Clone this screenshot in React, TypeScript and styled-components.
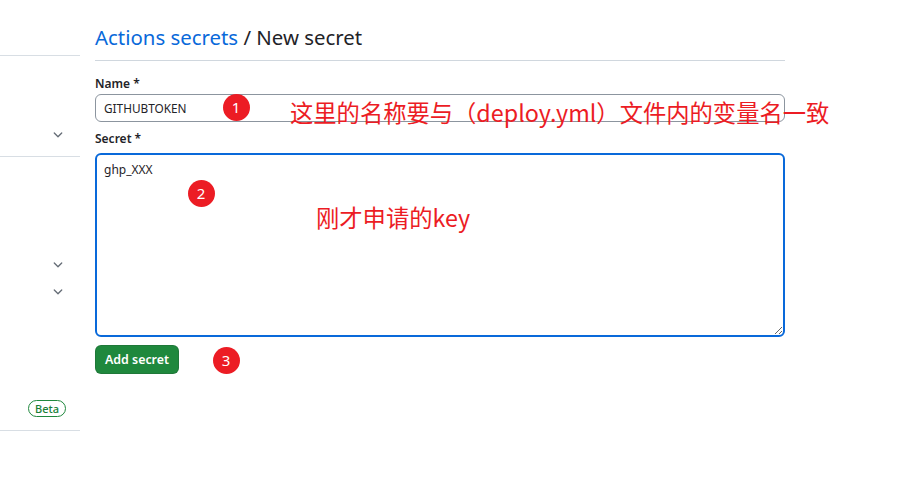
import React from "react";
import styled, { createGlobalStyle } from "styled-components";

const Global = createGlobalStyle`
  html, body { margin: 0; padding: 0; background: #ffffff; }
  body { font-family: "Noto Sans", "Open Sans", sans-serif; color: #1f2328; }
  * { box-sizing: border-box; }
`;

const Page = styled.div`
  position: relative;
  display: flex;
  gap: 15px;
  width: 907px;
  height: 487px;
  overflow: hidden;
`;

const Sidebar = styled.nav`
  width: 80px;
  flex: none;
  display: flex;
  flex-direction: column;
`;

const SideSection = styled.div<{ $top: number; $height: number }>`
  height: ${(p) => p.$height}px;
  padding-top: ${(p) => p.$top}px;
  border-bottom: 1px solid #d8dee4;
  display: flex;
  flex-direction: column;
`;

const SideRow = styled.div<{ $mt?: number; $pr?: number }>`
  height: 27px;
  margin-top: ${(p) => p.$mt ?? 0}px;
  padding-right: ${(p) => p.$pr ?? 15}px;
  display: flex;
  align-items: center;
  justify-content: flex-end;
  color: #656d76;
`;

const Beta = styled.span`
  display: inline-flex;
  align-items: center;
  height: 17px;
  padding: 0 6px;
  border: 1px solid #1f883d;
  border-radius: 999px;
  color: #1a7f37;
  font-size: 11px;
  font-weight: 500;
  line-height: 1;
`;

const Main = styled.main`
  width: 690px;
  flex: none;
  display: flex;
  flex-direction: column;
`;

const Header = styled.div`
  padding: 23px 0 9px;
  border-bottom: 1px solid #d0d7de;
`;

const Title = styled.h2`
  margin: 0;
  font-size: 20.4px;
  font-weight: 400;
  line-height: 28px;
  color: #1f2328;
  white-space: nowrap;
`;

const TitleLink = styled.a`
  color: #0969da;
  text-decoration: none;
`;

const Label = styled.label<{ $mt: number }>`
  display: block;
  margin-top: ${(p) => p.$mt}px;
  font-size: 12px;
  font-weight: 600;
  line-height: 20px;
  color: #1f2328;
`;

const TextInput = styled.input`
  display: block;
  width: 100%;
  height: 28px;
  padding: 0 8px;
  border: 1px solid #8c959f;
  border-radius: 6px;
  font-family: "Noto Sans", "Open Sans", sans-serif;
  font-size: 11.8px;
  color: #1f2328;
  background: #ffffff;
  outline: none;
`;

const SecretArea = styled.textarea`
  display: block;
  width: 100%;
  height: 184px;
  margin-top: 4px;
  padding: 5px 7px;
  border: 2px solid #0969da;
  border-radius: 6px;
  font-family: "Noto Sans", "Open Sans", sans-serif;
  font-size: 12px;
  line-height: 20px;
  color: #1f2328;
  background: #ffffff;
  outline: none;
  resize: vertical;
`;

const PrimaryButton = styled.button`
  align-self: flex-start;
  margin-top: 8px;
  width: 84px;
  height: 29px;
  padding: 0;
  border: 1px solid rgba(31, 35, 40, 0.15);
  border-radius: 6px;
  background: #1f883d;
  color: #ffffff;
  font-family: "Noto Sans", "Open Sans", sans-serif;
  font-size: 12.4px;
  font-weight: 600;
  cursor: pointer;
`;

const Marker = styled.span<{ $x: number; $y: number }>`
  position: absolute;
  left: ${(p) => p.$x - 13.5}px;
  top: ${(p) => p.$y - 13.5}px;
  width: 27px;
  height: 27px;
  border-radius: 50%;
  background: #ec1c24;
  color: #ffffff;
  font-family: "Noto Sans", sans-serif;
  font-size: 15px;
  display: flex;
  align-items: center;
  justify-content: center;
`;

const Note = styled.span<{ $x: number; $y: number }>`
  position: absolute;
  left: ${(p) => p.$x}px;
  top: ${(p) => p.$y}px;
  color: #ec1c24;
  font-family: "Noto Sans CJK SC", "Noto Sans", sans-serif;
  font-size: 23.3px;
  line-height: 26px;
  white-space: nowrap;
`;

const Chevron = () => (
  <svg width="14" height="14" viewBox="0 0 16 16" fill="currentColor" aria-hidden="true">
    <path d="M12.78 5.22a.749.749 0 0 1 0 1.06l-4.25 4.25a.749.749 0 0 1-1.06 0L3.22 6.28a.749.749 0 1 1 1.06-1.06L8 8.939l3.72-3.719a.749.749 0 0 1 1.06 0Z" />
  </svg>
);

export default function App() {
  return (
    <>
      <Global />
      <Page>
        <Sidebar>
          <SideSection $top={0} $height={56} />
          <SideSection $top={65} $height={101}>
            <SideRow>
              <Chevron />
            </SideRow>
          </SideSection>
          <SideSection $top={94} $height={274}>
            <SideRow>
              <Chevron />
            </SideRow>
            <SideRow>
              <Chevron />
            </SideRow>
            <SideRow $mt={90} $pr={14}>
              <Beta>Beta</Beta>
            </SideRow>
          </SideSection>
        </Sidebar>
        <Main>
          <Header>
            <Title>
              <TitleLink href="#">Actions secrets</TitleLink> / New secret
            </Title>
          </Header>
          <Label $mt={13}>Name *</Label>
          <TextInput defaultValue="GITHUBTOKEN" />
          <Label $mt={7}>Secret *</Label>
          <SecretArea defaultValue="ghp_XXX" />
          <PrimaryButton>Add secret</PrimaryButton>
        </Main>
        <Marker $x={236} $y={107}>1</Marker>
        <Marker $x={201} $y={193}>2</Marker>
        <Marker $x={226} $y={360}>3</Marker>
        <Note $x={290} $y={99}>这里的名称要与（deploy.yml）文件内的变量名一致</Note>
        <Note $x={316} $y={204}>刚才申请的key</Note>
      </Page>
    </>
  );
}
